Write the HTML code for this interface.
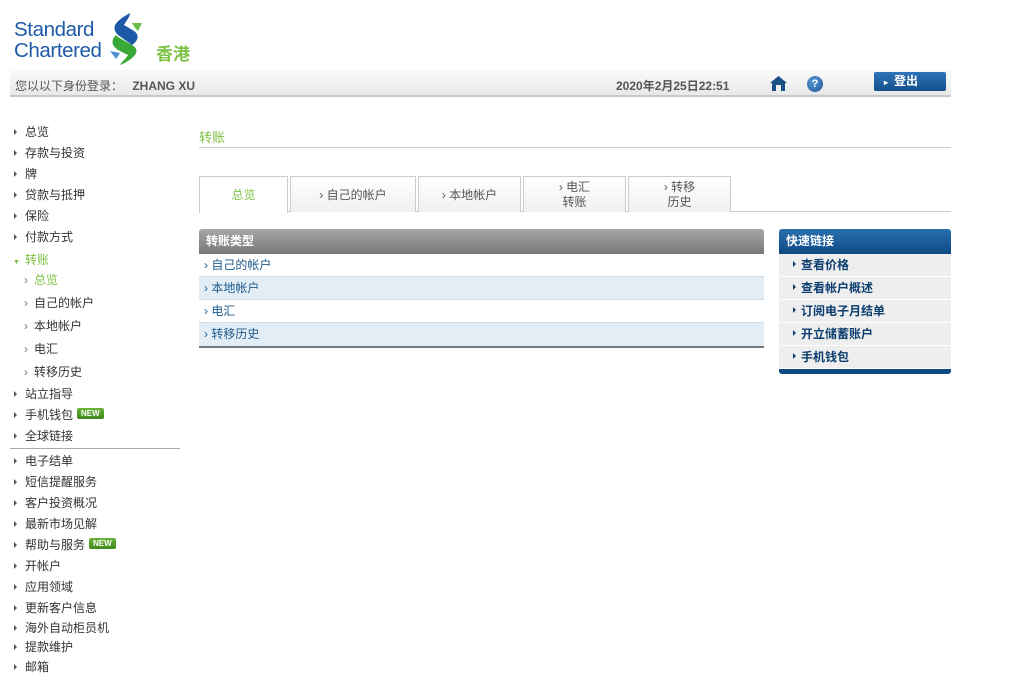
<!DOCTYPE html>
<html><head><meta charset="utf-8"><style>
*{margin:0;padding:0;box-sizing:border-box}
body{width:1036px;height:673px;background:#fff;font-family:"Liberation Sans","Noto Sans CJK SC",sans-serif;font-size:12px;color:#333;position:relative;overflow:hidden}
.a{position:absolute;white-space:nowrap}
.m{position:absolute;left:14px;font-size:12px;color:#333;line-height:14px}
.m:before{content:"";display:inline-block;width:0;height:0;border-left:3px solid #555;border-top:3px solid transparent;border-bottom:3px solid transparent;margin-right:8px;vertical-align:1px}
.s{position:absolute;left:24px;color:#333;line-height:14px}
.s:before{content:"›";color:#777;margin-right:6px}
.new{display:inline-block;background:linear-gradient(#6bb33a,#3d8a1a);color:#fff;font-size:8px;font-weight:bold;padding:1px 4px;border-radius:2px;margin-left:4px;vertical-align:3px;line-height:9px}
.tab{position:absolute;top:176px;height:36px;border:1px solid #ccc;border-bottom:none;background:linear-gradient(#fff,#f0f0f0);color:#555;text-align:center;font-size:12px;line-height:15px}
.row{position:absolute;left:199px;width:565px;height:23px;line-height:22px;color:#1f5a8a;padding-left:5px;border-bottom:1px solid #d8dde2}
.q{position:absolute;left:779px;width:172px;height:23px;line-height:23px;background:#eeeeee;border-bottom:1px solid #fff;color:#0c3d6e;font-weight:bold;padding-left:14px}
.q:before{content:"";display:inline-block;border-left:3px solid #0c3d6e;border-top:3px solid transparent;border-bottom:3px solid transparent;margin-right:5px;vertical-align:2px}
</style></head><body>
<div class="a" style="left:14px;top:19px;font-size:20.5px;line-height:21px;color:#1e5aa8;letter-spacing:-0.4px">Standard<br>Chartered</div>
<svg class="a" style="left:108px;top:13px" width="36" height="52" viewBox="0 0 36 52">
<path d="M22 0 C8 8 2 14 10 22 L24 32 C30 28 32 22 26 18 L16 12 C18 8 22 4 22 0 Z" fill="#1e5aa8"/>
<path d="M24 10 L34 10 L30 18 C28 16 26 14 24 10 Z" fill="#6cc04a"/>
<path d="M8 22 C2 28 4 34 12 38 L20 42 C18 46 14 48 12 52 C26 46 34 38 24 32 L10 24 Z" fill="#38a935"/>
<path d="M2 38 L12 40 L8 46 Z" fill="#4a90d0"/>
</svg>
<div class="a" style="left:156px;top:40px;font-size:17px;color:#7dc242;font-weight:bold">香港</div>
<div class="a" style="left:10px;top:70px;width:941px;height:27px;background:linear-gradient(#fafafa,#e8e8e8);border-bottom:2px solid #c8c8c8"></div>
<div class="a" style="left:15px;top:77px;color:#555">您以以下身份登录： <b style="margin-left:6px">ZHANG XU</b></div>
<div class="a" style="left:616px;top:77px;color:#555;font-weight:bold">2020年2月25日22:51</div>
<svg class="a" style="left:770px;top:76px" width="17" height="15" viewBox="0 0 17 15"><path d="M8.5 0 L17 7 L15 7 L15 15 L11 15 L11 9 L6 9 L6 15 L2 15 L2 7 L0 7 Z" fill="#1b4f86"/></svg>
<div class="a" style="left:807px;top:76px;width:16px;height:16px;border-radius:50%;background:radial-gradient(circle at 40% 35%,#5a9ad8,#1d5590);color:#fff;font-size:11px;font-weight:bold;text-align:center;line-height:16px">?</div>
<div class="a" style="left:874px;top:72px;width:72px;height:19px;background:linear-gradient(#2d74b8,#154f8b);border-radius:2px;color:#fff;font-weight:bold;font-size:12px;line-height:19px;padding-left:10px"><span style="font-size:8px;margin-right:6px">▸</span>登出</div>

<div class="m" style="top:125px">总览</div>
<div class="m" style="top:146px">存款与投资</div>
<div class="m" style="top:167px">牌</div>
<div class="m" style="top:188px">贷款与抵押</div>
<div class="m" style="top:209px">保险</div>
<div class="m" style="top:230px">付款方式</div>
<div class="a" style="left:13px;top:251px;color:#7dc242"><span style="font-size:7px;margin-right:5px">▼</span>转账</div>
<div class="s" style="top:273px;color:#7dc242">总览</div>
<div class="s" style="top:296px">自己的帐户</div>
<div class="s" style="top:319px">本地帐户</div>
<div class="s" style="top:342px">电汇</div>
<div class="s" style="top:365px">转移历史</div>
<div class="m" style="top:387px">站立指导</div>
<div class="m" style="top:408px">手机钱包<span class="new">NEW</span></div>
<div class="m" style="top:429px">全球链接</div>
<div class="a" style="left:10px;top:448px;width:170px;border-top:1px solid #aaa"></div>
<div class="m" style="top:454px">电子结单</div>
<div class="m" style="top:475px">短信提醒服务</div>
<div class="m" style="top:496px">客户投资概况</div>
<div class="m" style="top:517px">最新市场见解</div>
<div class="m" style="top:538px">帮助与服务<span class="new">NEW</span></div>
<div class="m" style="top:559px">开帐户</div>
<div class="m" style="top:580px">应用领域</div>
<div class="m" style="top:601px">更新客户信息</div>
<div class="m" style="top:621px">海外自动柜员机</div>
<div class="m" style="top:640px">提款维护</div>
<div class="m" style="top:660px">邮箱</div>

<div class="a" style="left:199px;top:127px;color:#7dc242;font-size:13px">转账</div>
<div class="a" style="left:199px;top:147px;width:752px;border-top:1px solid #ccc"></div>
<div class="a" style="left:199px;top:211px;width:752px;border-top:1px solid #ccc"></div>
<div class="tab" style="left:199px;width:89px;background:#fff;height:37px;color:#7dc242;line-height:36px">总览</div>
<div class="tab" style="left:290px;width:126px;line-height:36px">› 自己的帐户</div>
<div class="tab" style="left:418px;width:103px;line-height:36px">› 本地帐户</div>
<div class="tab" style="left:523px;width:103px;padding-top:3px">› 电汇<br>转账</div>
<div class="tab" style="left:628px;width:103px;padding-top:3px">› 转移<br>历史</div>

<div class="a" style="left:199px;top:229px;width:565px;height:25px;background:linear-gradient(#a8a8a8,#777);border-radius:3px 3px 0 0;color:#fff;font-weight:bold;line-height:25px;padding-left:7px">转账类型</div>
<div class="row" style="top:254px;background:#fff">› 自己的帐户</div>
<div class="row" style="top:277px;background:#e2edf5">› 本地帐户</div>
<div class="row" style="top:300px;background:#fff">› 电汇</div>
<div class="row" style="top:323px;background:#e2edf5;border-bottom:2px solid #777;height:25px">› 转移历史</div>

<div class="a" style="left:779px;top:229px;width:172px;height:25px;background:linear-gradient(#2a70b0,#0e4a84);border-radius:3px 3px 0 0;color:#fff;font-weight:bold;line-height:25px;padding-left:7px">快速链接</div>
<div class="q" style="top:254px">查看价格</div>
<div class="q" style="top:277px">查看帐户概述</div>
<div class="q" style="top:300px">订阅电子月结单</div>
<div class="q" style="top:323px">开立储蓄账户</div>
<div class="q" style="top:346px">手机钱包</div>
<div class="a" style="left:779px;top:369px;width:172px;height:5px;background:#0e4a84;border-radius:0 0 3px 3px"></div>
</body></html>
